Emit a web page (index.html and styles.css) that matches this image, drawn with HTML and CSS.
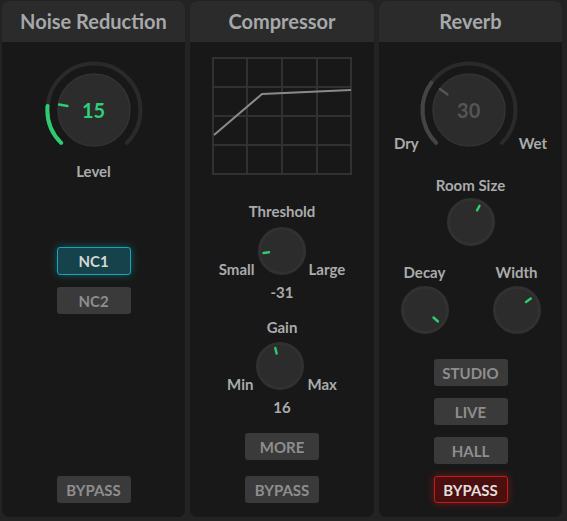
FILE: index.html
```html
<!DOCTYPE html>
<html lang="en">
<head>
<meta charset="utf-8">
<title>Effects Rack</title>
<link rel="stylesheet" href="styles.css">
</head>
<body>
<div class="rack">

  <!-- Noise reduction -->
  <section class="panel">
    <header class="panel-head">Noise Reduction</header>
    <div class="panel-body nr-body">
      <div class="big-knob">
        <svg width="100" height="100" viewBox="0 0 100 100">
          <path class="ring" d="M17.12 82.88 A46.5 46.5 0 1 1 82.88 82.88"/>
          <path class="arc arc-green" d="M17.12 82.88 A46.5 46.5 0 0 1 3.55 45.9"/>
          <circle class="knob-face" cx="50" cy="50" r="36"/>
          <line class="tick tick-green" x1="15" y1="44.5" x2="23.5" y2="46"/>
        </svg>
        <span class="big-value value-green">15</span>
      </div>
      <div class="label">Level</div>
      <div class="nc-group">
        <button class="btn btn-teal">NC1</button>
        <button class="btn">NC2</button>
      </div>
      <div class="bottom-btns">
        <button class="btn">BYPASS</button>
      </div>
    </div>
  </section>

  <!-- Compressor -->
  <section class="panel">
    <header class="panel-head">Compressor</header>
    <div class="panel-body comp-body">
      <svg class="graph" width="140" height="118" viewBox="0 0 140 118">
        <g class="grid">
          <rect x="1" y="1" width="138" height="116"/>
          <line x1="35" y1="1" x2="35" y2="117"/>
          <line x1="70" y1="1" x2="70" y2="117"/>
          <line x1="105" y1="1" x2="105" y2="117"/>
          <line x1="1" y1="30" x2="139" y2="30"/>
          <line x1="1" y1="59" x2="139" y2="59"/>
          <line x1="1" y1="88" x2="139" y2="88"/>
        </g>
        <polyline class="curve" points="2,78 50,37 139,33"/>
      </svg>

      <div class="label comp-label-top">Threshold</div>
      <div class="knob-row">
        <span class="side">Small</span>
        <svg class="knob" width="48" height="48" viewBox="0 0 48 48">
          <circle class="knob-face" cx="24" cy="24" r="22.5"/>
          <line class="tick tick-green" x1="5.5" y1="26" x2="11" y2="25.2"/>
        </svg>
        <span class="side">Large</span>
      </div>
      <div class="label value">-31</div>

      <div class="label comp-label-gain">Gain</div>
      <div class="knob-row">
        <span class="side">Min</span>
        <svg class="knob" width="48" height="48" viewBox="0 0 48 48">
          <circle class="knob-face" cx="24" cy="24" r="22.5"/>
          <line class="tick tick-green" x1="19.3" y1="6" x2="20.6" y2="11.5"/>
        </svg>
        <span class="side">Max</span>
      </div>
      <div class="label value">16</div>

      <div class="bottom-btns">
        <button class="btn">MORE</button>
        <button class="btn">BYPASS</button>
      </div>
    </div>
  </section>

  <!-- Reverb -->
  <section class="panel">
    <header class="panel-head">Reverb</header>
    <div class="panel-body rev-body">
      <div class="mix-row">
        <span class="side">Dry</span>
        <div class="big-knob">
          <svg width="100" height="100" viewBox="0 0 100 100">
            <path class="ring" d="M17.12 82.88 A46.5 46.5 0 1 1 82.88 82.88"/>
            <path class="arc arc-gray" d="M17.12 82.88 A46.5 46.5 0 0 1 12.38 22.67"/>
            <circle class="knob-face" cx="50" cy="50" r="36"/>
            <line class="tick tick-gray" x1="21" y1="29" x2="28.5" y2="34.5"/>
          </svg>
          <span class="big-value value-dim">30</span>
        </div>
        <span class="side">Wet</span>
      </div>

      <div class="label room-label">Room Size</div>
      <svg class="knob" width="48" height="48" viewBox="0 0 48 48">
        <circle class="knob-face" cx="24" cy="24" r="22.5"/>
        <line class="tick tick-green" x1="30" y1="12.3" x2="32.5" y2="7.8"/>
      </svg>

      <div class="pair">
        <div class="pair-item">
          <div class="label">Decay</div>
          <svg class="knob" width="48" height="48" viewBox="0 0 48 48">
            <circle class="knob-face" cx="24" cy="24" r="22.5"/>
            <line class="tick tick-green" x1="32.5" y1="31.5" x2="37" y2="35.5"/>
          </svg>
        </div>
        <div class="pair-item">
          <div class="label">Width</div>
          <svg class="knob" width="48" height="48" viewBox="0 0 48 48">
            <circle class="knob-face" cx="24" cy="24" r="22.5"/>
            <line class="tick tick-green" x1="33" y1="16" x2="37.8" y2="12.5"/>
          </svg>
        </div>
      </div>

      <div class="preset-group">
        <button class="btn">STUDIO</button>
        <button class="btn">LIVE</button>
        <button class="btn">HALL</button>
        <button class="btn btn-red">BYPASS</button>
      </div>
    </div>
  </section>

</div>
</body>
</html>
```

FILE: styles.css
```css
* {
  box-sizing: border-box;
}

html,
body {
  margin: 0;
  height: 100%;
  background: #232323;
}

body {
  font-family: "Lato", "Liberation Sans", sans-serif;
  font-weight: 700;
  color: #a9a9a9;
}

.rack {
  display: grid;
  grid-template-columns: 183px 184px 183px;
  column-gap: 5px;
  padding: 1px 5px 4px 2px;
  height: 521px;
}

.panel {
  display: flex;
  flex-direction: column;
  background: #181818;
  border-radius: 7px;
  overflow: hidden;
}

.panel-head {
  height: 41px;
  flex: none;
  display: flex;
  align-items: center;
  justify-content: center;
  background: #2b2b2b;
  font-size: 20px;
  color: #a6a8aa;
  padding-bottom: 1px;
}

.panel-body {
  flex: 1;
  display: flex;
  flex-direction: column;
  align-items: center;
  padding-bottom: 14px;
}

/* knobs */
.big-knob {
  position: relative;
  width: 100px;
  height: 100px;
  flex: none;
}

.big-knob svg {
  display: block;
}

.big-value {
  position: absolute;
  inset: 0;
  display: flex;
  align-items: center;
  justify-content: center;
  font-size: 20px;
}

.value-green {
  color: #2fd07a;
}

.value-dim {
  color: #555;
}

.ring {
  fill: none;
  stroke: #2a2a2a;
  stroke-width: 4;
  stroke-linecap: round;
}

.arc {
  fill: none;
  stroke-width: 4;
  stroke-linecap: round;
}

.arc-green {
  stroke: #2ecc71;
}

.arc-gray {
  stroke: #444;
}

.knob-face {
  fill: #2c2c2c;
  stroke: #313131;
  stroke-width: 3;
}

.big-knob .knob-face {
  stroke-width: 1.5;
  stroke: #333;
}

.tick {
  stroke-width: 2.4;
  stroke-linecap: round;
}

.tick-green {
  stroke: #2ecc71;
}

.tick-gray {
  stroke: #555;
}

.knob {
  display: block;
  flex: none;
}

.label,
.side {
  font-size: 15px;
  line-height: 18px;
  color: #aaabac;
}

/* buttons */
.btn {
  font-family: inherit;
  font-weight: 700;
  font-size: 15px;
  width: 74px;
  height: 27px;
  padding: 0;
  border: 0;
  border-radius: 3px;
  background: #3a3a3a;
  color: #8e8e8e;
}

.btn-teal {
  height: 28px;
  background: #16434b;
  color: #d3d7d8;
  border: 1.5px solid #14a6bb;
  box-shadow: 0 0 8px rgba(20, 166, 187, 0.45);
}

.btn-red {
  background: #4a0f0f;
  color: #e2dede;
  border: 1.5px solid #c81919;
  box-shadow: 0 0 8px rgba(200, 25, 25, 0.5);
}

.bottom-btns {
  margin-top: auto;
  display: flex;
  flex-direction: column;
  gap: 16px;
}

/* noise reduction */
.nr-body {
  padding-top: 18px;
}

.nr-body .label {
  margin-top: 2px;
}

.nc-group {
  margin-top: 67px;
  display: flex;
  flex-direction: column;
  gap: 12px;
}

/* compressor */
.comp-body {
  padding-top: 15px;
}

.graph {
  display: block;
}

.grid rect,
.grid line {
  fill: none;
  stroke: #313131;
  stroke-width: 2;
}

.curve {
  fill: none;
  stroke: #8a8a8a;
  stroke-width: 2;
}

.comp-label-top {
  margin-top: 27px;
}

.knob-row {
  display: flex;
  align-items: flex-end;
  gap: 3px;
  margin-top: 7px;
}

.knob-row .side {
  margin-bottom: -3px;
}

.comp-body .value {
  margin-top: 8px;
}

.comp-label-gain {
  margin-top: 17px;
}

.comp-label-gain + .knob-row {
  margin-top: 6px;
}

/* reverb */
.rev-body {
  padding-top: 18px;
}

.mix-row {
  display: flex;
  align-items: flex-end;
}

.mix-row .side {
  margin-bottom: 8px;
}

.room-label {
  margin-top: 16px;
  margin-bottom: 4px;
}

.pair {
  display: flex;
  gap: 44px;
  margin-top: 17px;
}

.pair-item {
  display: flex;
  flex-direction: column;
  align-items: center;
  gap: 5px;
}

.preset-group {
  margin-top: auto;
  display: flex;
  flex-direction: column;
  gap: 12px;
}
```
